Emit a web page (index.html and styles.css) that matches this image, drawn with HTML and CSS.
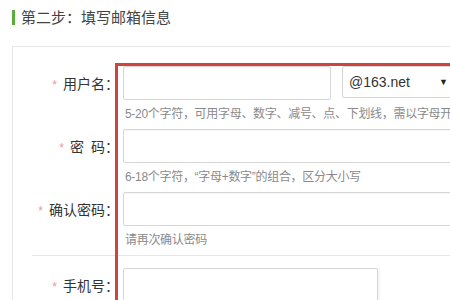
FILE: index.html
```html
<!DOCTYPE html>
<html lang="zh-CN">
<head>
  <meta charset="UTF-8">
  <meta name="viewport" content="width=device-width, initial-scale=1.0">
  <title>填写邮箱信息</title>
  <link rel="stylesheet" href="styles.css">
</head>
<body>
  <div class="page">
    <h2 class="step-title">第二步<span class="colon">：</span>填写邮箱信息</h2>

    <div class="card">
      <div class="form-row">
        <label class="form-label"><span class="req">*</span>用户名<span class="colon">：</span></label>
        <div class="form-field">
          <div class="field-line">
            <input type="text" class="text-input input-user">
            <div class="domain-select">
              <span>@163.net</span>
              <span class="arrow">▼</span>
            </div>
          </div>
          <p class="hint">5-20个字符，可用字母、数字、减号、点、下划线，需以字母开头</p>
        </div>
      </div>

      <div class="form-row">
        <label class="form-label"><span class="req">*</span>密&ensp;码<span class="colon">：</span></label>
        <div class="form-field">
          <input type="password" class="text-input input-wide">
          <p class="hint">6-18个字符，“字母+数字”的组合，区分大小写</p>
        </div>
      </div>

      <div class="form-row">
        <label class="form-label"><span class="req">*</span>确认密码<span class="colon">：</span></label>
        <div class="form-field">
          <input type="password" class="text-input input-wide">
          <p class="hint">请再次确认密码</p>
        </div>
      </div>

      <div class="divider"></div>

      <div class="form-row">
        <label class="form-label"><span class="req">*</span>手机号<span class="colon">：</span></label>
        <div class="form-field">
          <input type="text" class="text-input input-phone">
        </div>
      </div>
    </div>

    <!-- annotation box drawn over the form -->
    <div class="highlight"></div>
  </div>
</body>
</html>
```

FILE: styles.css
```css
* {
  margin: 0;
  padding: 0;
  box-sizing: border-box;
}

html, body {
  background: #fff;
  overflow: hidden;
}

body {
  font-family: "Liberation Sans", "Noto Sans CJK SC", sans-serif;
  color: #333;
}

.page {
  position: relative;
  height: 300px;
}

/* centred full-width colon, as in the original font */
.colon {
  font-family: "Noto Sans CJK JP", "Noto Sans CJK SC", sans-serif;
}

.step-title {
  margin: 10px 0 0 12px;
  padding-left: 6px;
  border-left: 3px solid #5cab3f;
  font-size: 15px;
  font-weight: normal;
  line-height: 14px;
  color: #444;
}

.card {
  margin: 21px 0 0 12px;
  width: 480px;
  padding-top: 19px;
  border: 1px solid #e6e6e6;
  border-right: none;
  height: 300px;
}

.form-row {
  display: flex;
  align-items: flex-start;
  margin-bottom: 6px;
}

.form-label {
  width: 106px;
  flex-shrink: 0;
  height: 34px;
  line-height: 35px;
  text-align: right;
  font-size: 14px;
  color: #333;
  margin-right: 4px;
}

.req {
  color: #e79a9a;
  font-size: 12px;
  margin-right: 6px;
}

.field-line {
  display: flex;
  align-items: flex-start;
  gap: 11px;
}

.text-input {
  display: block;
  height: 34px;
  border: 1px solid #d6d6d6;
  border-radius: 2px;
  background: #fff;
  box-shadow: inset 0 1px 1px rgba(0, 0, 0, 0.04);
  outline: none;
}

.input-user {
  width: 208px;
}

.input-wide {
  width: 340px;
}

.input-phone {
  width: 255px;
  box-shadow: 2px 0 1px rgba(0, 0, 0, 0.04);
}

.domain-select {
  width: 120px;
  height: 32px;
  border: 1px solid #d6d6d6;
  border-radius: 2px;
  display: flex;
  align-items: center;
  justify-content: space-between;
  padding: 0 0 0 6px;
  font-size: 14px;
  color: #333;
}

.domain-select .arrow {
  font-size: 9px;
  color: #222;
  margin-right: 13px;
}

.hint {
  margin-top: 5px;
  padding-left: 2px;
  font-size: 12px;
  line-height: 18px;
  letter-spacing: -0.3px;
  color: #8a8a8a;
  white-space: nowrap;
}

.divider {
  height: 1px;
  background: #e6e6e6;
  margin: 0 0 12px 19px;
}

.highlight {
  position: absolute;
  left: 115px;
  top: 53px;
  width: 400px;
  height: 300px;
  border: 3px solid #d0433e;
  pointer-events: none;
}
```
